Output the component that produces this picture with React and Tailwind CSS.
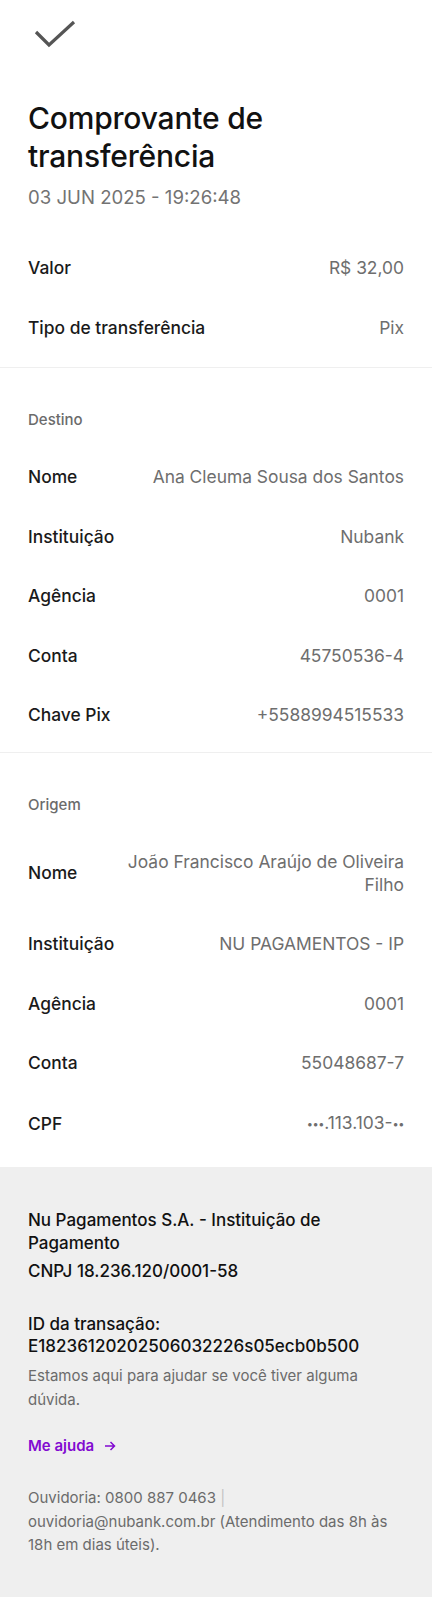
import React from "react";

const font = { fontFamily: "Inter, 'Noto Sans', sans-serif" };

const Row = ({ label, value }) => (
  <div className="flex items-center justify-between gap-6 py-[18.25px] leading-[23px] text-[17.4px]">
    <span className="font-medium text-[#1a1a1a] shrink-0">{label}</span>
    <span className="text-right text-[#6e6e6e]">{value}</span>
  </div>
);

const Section = ({ title, rows, last, pb }) => (
  <section className={`px-[28px] ${last ? "pb-[13px]" : "border-b border-[#efefef]"} ${pb}`}>
    {title && (
      <div className="pt-[42px] pb-[17px] text-[15px] leading-[20px] font-medium text-[#6b6b6b]">
        {title}
      </div>
    )}
    {rows.map((r) => (
      <Row key={r[0]} label={r[0]} value={r[1]} />
    ))}
  </section>
);

// small masked digits, like the app renders them
const Dots = ({ n }) => (
  <span className="text-[11px] tracking-[-0.4px] align-[1px]">{"•".repeat(n)}</span>
);

export default function App() {
  const destino = [
    ["Nome", "Ana Cleuma Sousa dos Santos"],
    ["Instituição", "Nubank"],
    ["Agência", "0001"],
    ["Conta", "45750536-4"],
    ["Chave Pix", "+5588994515533"],
  ];
  const origem = [
    ["Nome", "João Francisco Araújo de Oliveira Filho"],
    ["Instituição", "NU PAGAMENTOS - IP"],
    ["Agência", "0001"],
    ["Conta", "55048687-7"],
    [
      "CPF",
      <>
        <Dots n={3} />
        .113.103-
        <Dots n={2} />
      </>,
    ],
  ];

  return (
    <div className="min-h-screen bg-white" style={font}>
      {/* header */}
      <header className="px-[28px] pt-[20px]">
        <svg width="44" height="32" viewBox="0 0 44 32" className="ml-[6px]">
          <polyline
            points="2,12 15,25 40,2"
            fill="none"
            stroke="#555555"
            strokeWidth="3.2"
          />
        </svg>
        <h1 className="mt-[47px] text-[30px] leading-[38px] font-medium text-[#111] tracking-[-0.2px]">
          Comprovante de
          <br />
          transferência
        </h1>
        <p className="mt-[10px] text-[18.6px] leading-[24px] text-[#737373]">
          03 JUN 2025 - 19:26:48
        </p>
      </header>

      <div className="mt-[29px]">
        <Section rows={[["Valor", "R$ 32,00"], ["Tipo de transferência", "Pix"]]} pb="pb-[10px]" />
        <Section title="Destino" rows={destino} pb="pb-[7px]" />
        <Section title="Origem" rows={origem} last />
      </div>

      {/* footer */}
      <footer className="bg-[#efefef] px-[28px] pt-[42px] pb-[40px]">
        <p className="text-[17px] leading-[23px] font-medium text-[#111]">
          Nu Pagamentos S.A. - Instituição de Pagamento
        </p>
        <p className="mt-[5px] text-[17px] leading-[23px] font-medium text-[#111]">
          CNPJ 18.236.120/0001-58
        </p>
        <p className="mt-[30px] text-[17px] leading-[22px] font-medium text-[#111]">
          ID da transação:
          <br />
          E18236120202506032226s05ecb0b500
        </p>
        <p className="mt-[7px] text-[15px] leading-[24px] text-[#6b6b6b]">
          Estamos aqui para ajudar se você tiver alguma dúvida.
        </p>
        <button className="mt-[24px] flex items-center gap-[10px] text-[15px] leading-[20px] font-semibold text-[#820ad1]">
          Me ajuda
          <svg width="12" height="12" viewBox="0 0 12 12" fill="none" stroke="#820ad1" strokeWidth="1.5">
            <path d="M1 6h9.5M6.5 2l4 4-4 4" />
          </svg>
        </button>
        <p className="mt-[30px] text-[15px] leading-[23.5px] text-[#6b6b6b]">
          Ouvidoria: 0800 887 0463 <span className="text-[#c4c4c4]">|</span>
          <br />
          ouvidoria@nubank.com.br (Atendimento das 8h às 18h em dias úteis).
        </p>
      </footer>
    </div>
  );
}
